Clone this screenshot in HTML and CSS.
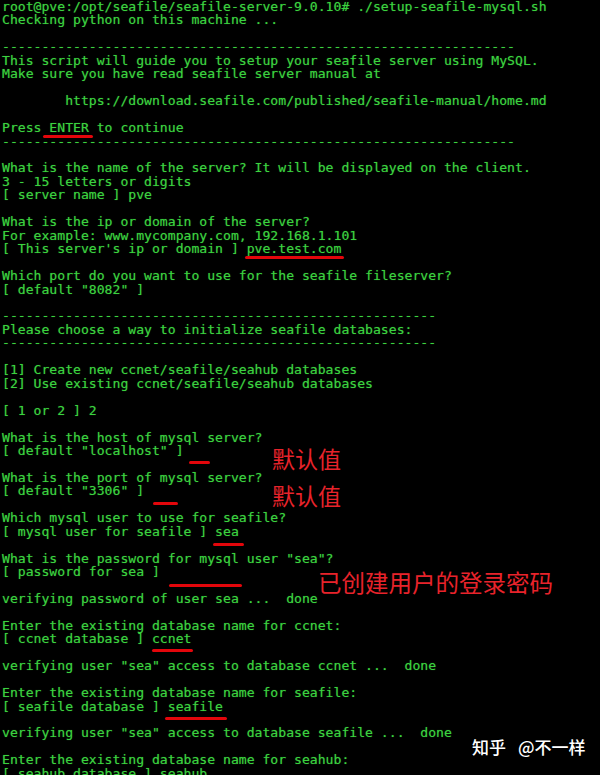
FILE: index.html
```html
<!DOCTYPE html>
<html lang="zh-CN">
<head>
<meta charset="utf-8">
<title>setup-seafile-mysql.sh</title>
<link rel="stylesheet" href="styles.css">
</head>
<body>
<main class="screen">
<pre class="term">root@pve:/opt/seafile/seafile-server-9.0.10# ./setup-seafile-mysql.sh
Checking python on this machine ...

-----------------------------------------------------------------
This script will guide you to setup your seafile server using MySQL.
Make sure you have read seafile server manual at

        https://download.seafile.com/published/seafile-manual/home.md

Press ENTER to continue
-----------------------------------------------------------------

What is the name of the server? It will be displayed on the client.
3 - 15 letters or digits
[ server name ] pve

What is the ip or domain of the server?
For example: www.mycompany.com, 192.168.1.101
[ This server's ip or domain ] pve.test.com

Which port do you want to use for the seafile fileserver?
[ default "8082" ]

-------------------------------------------------------
Please choose a way to initialize seafile databases:
-------------------------------------------------------

[1] Create new ccnet/seafile/seahub databases
[2] Use existing ccnet/seafile/seahub databases

[ 1 or 2 ] 2

What is the host of mysql server?
[ default "localhost" ]

What is the port of mysql server?
[ default "3306" ]

Which mysql user to use for seafile?
[ mysql user for seafile ] sea

What is the password for mysql user "sea"?
[ password for sea ]

verifying password of user sea ...  done

Enter the existing database name for ccnet:
[ ccnet database ] ccnet

verifying user "sea" access to database ccnet ...  done

Enter the existing database name for seafile:
[ seafile database ] seafile

verifying user "sea" access to database seafile ...  done

Enter the existing database name for seahub:
[ seahub database ] seahub</pre>

<div class="marks" aria-hidden="true">
  <span class="stroke s-enter"></span>
  <span class="stroke s-domain"></span>
  <span class="stroke s-host"></span>
  <span class="stroke s-port"></span>
  <span class="stroke s-user"></span>
  <span class="stroke s-pass"></span>
  <span class="stroke s-ccnet"></span>
  <span class="stroke s-seafile"></span>
</div>

<p class="note n-host">默认值</p>
<p class="note n-port">默认值</p>
<p class="note n-pass">已创建用户的登录密码</p>

<p class="watermark"><span>知乎</span><span>@不一样</span></p>
</main>
</body>
</html>
```

FILE: styles.css
```css
html, body {
  margin: 0;
  padding: 0;
  background: #000;
}

.screen {
  position: relative;
  width: 600px;
  height: 775px;
  overflow: hidden;
  background: #000;
}

.term {
  margin: 0;
  padding: 0 0 0 2px;
  font-family: "DejaVu Sans Mono", "Liberation Mono", monospace;
  font-size: 13.12px;
  line-height: 13.45px;
  color: #3bd23f;
  text-shadow: 0 0 1px rgba(59, 210, 63, 0.55);
  white-space: pre;
}

.stroke {
  position: absolute;
  height: 3px;
  border-radius: 2px;
  background: #e3060b;
}

.s-enter   { left: 43px;  top: 135px; width: 50px; }
.s-domain  { left: 245px; top: 256px; width: 99px; }
.s-host    { left: 189px; top: 461px; width: 21px; }
.s-port    { left: 153px; top: 502px; width: 25px; }
.s-user    { left: 213px; top: 543px; width: 31px; }
.s-pass    { left: 169px; top: 584px; width: 73px; }
.s-ccnet   { left: 152px; top: 649px; width: 41px; }
.s-seafile { left: 165px; top: 717px; width: 62px; }

.note {
  position: absolute;
  margin: 0;
  font-family: "Noto Sans CJK SC", "Noto Sans", sans-serif;
  font-size: 23px;
  line-height: 1;
  color: #e8232b;
  white-space: nowrap;
}

.n-host { left: 272px; top: 447px; }
.n-port { left: 272px; top: 484px; }
.n-pass { left: 318px; top: 571px; font-size: 23.5px; }

.watermark {
  position: absolute;
  margin: 0;
  left: 472px;
  top: 738px;
  display: flex;
  gap: 12px;
  font-family: "Noto Sans CJK SC", "Noto Sans", sans-serif;
  font-size: 17px;
  line-height: 1;
  font-weight: 500;
  color: #fff;
  text-shadow: 0 0 2px rgba(0, 0, 0, 0.6);
  white-space: nowrap;
}
```
